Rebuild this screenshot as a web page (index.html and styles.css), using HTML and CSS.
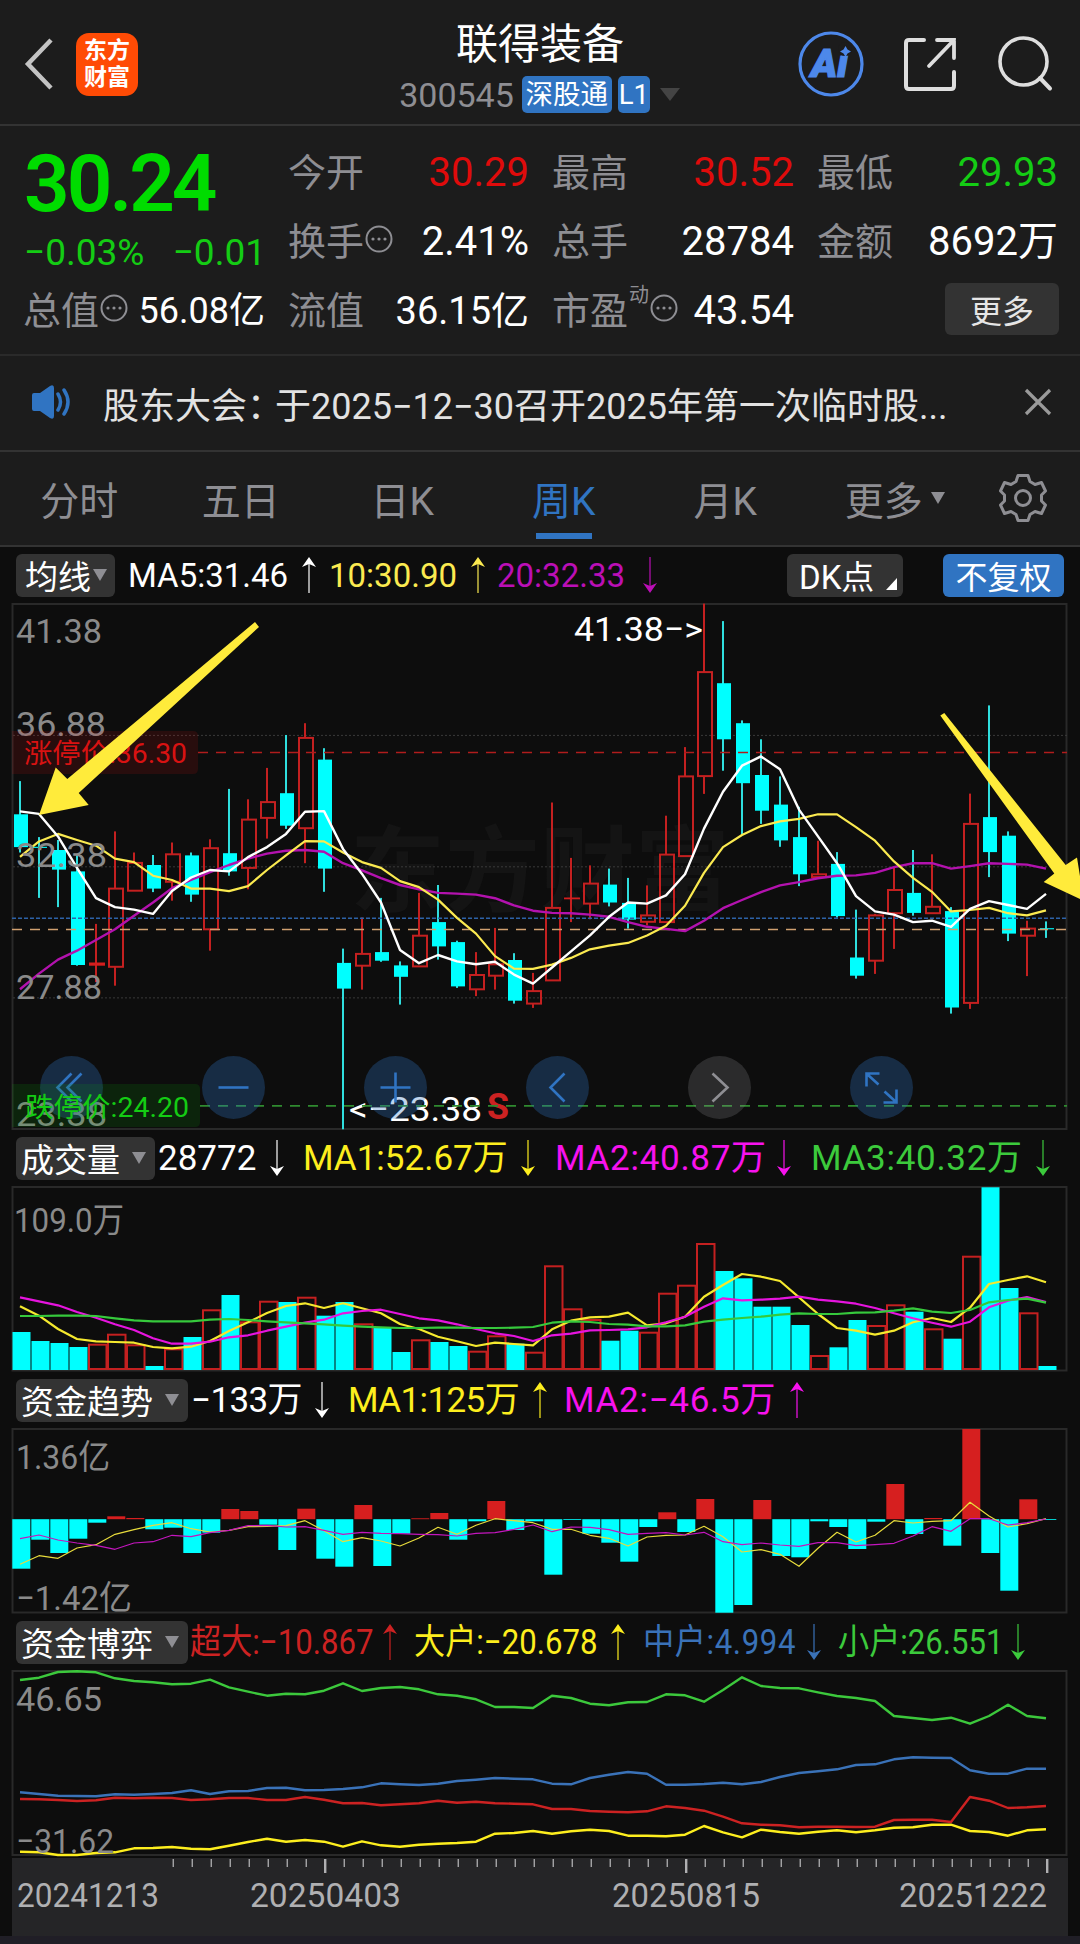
FILE: index.html
```html
<!DOCTYPE html>
<html lang="zh-CN">
  <head>
    <meta charset="UTF-8" />
    <meta name="viewport" content="width=device-width, initial-scale=1.0" />
    <title>联得装备 300545</title>
    <link rel="stylesheet" href="styles.css">
  </head>
  <body>
    <svg class="defs" width="0" height="0">
      <symbol id="up" viewBox="0 0 14 36">
        <path d="M7 4V36" fill="none" stroke="currentColor" stroke-width="1.6" opacity="0.75" />
        <path d="M7 0L14 10L7 7L0 10Z" fill="currentColor" />
      </symbol>
      <symbol id="down" viewBox="0 0 14 36">
        <path d="M7 0V32" fill="none" stroke="currentColor" stroke-width="1.6" opacity="0.75" />
        <path d="M7 36L14 26L7 29L0 26Z" fill="currentColor" />
      </symbol>
      <symbol id="dots" viewBox="0 0 28 28">
        <circle cx="14" cy="14" r="12.5" fill="none" stroke="currentColor" stroke-width="2" />
        <circle cx="8" cy="14" r="1.6" fill="currentColor" />
        <circle cx="14" cy="14" r="1.6" fill="currentColor" />
        <circle cx="20" cy="14" r="1.6" fill="currentColor" />
      </symbol>
    </svg>

    <div class="header">
      <div class="header-left">
        <svg class="back" width="30" height="52" viewBox="0 0 30 52">
          <path d="M27 2L4 26L27 50" fill="none" stroke="#c3c3c3" stroke-width="4.5" />
        </svg>
        <div class="logo"><span>东方</span><span>财富</span></div>
      </div>
      <div class="title">
        <h1>联得装备</h1>
        <div class="code">
          <span class="code-num">300545</span>
          <span class="tag">深股通</span>
          <span class="tag tag-l1">L1</span>
          <span class="tri tri-code"></span>
        </div>
      </div>
      <div class="header-right">
        <svg width="66" height="66" viewBox="0 0 66 66">
          <circle cx="33" cy="33" r="31" fill="none" stroke="#4d88ea" stroke-width="3.2" />
          <text class="ai" x="13" y="46" textLength="37" lengthAdjust="spacingAndGlyphs">Ai</text>
          <circle cx="47" cy="18" r="7" fill="#1c1c1c" />
          <path d="M47.500 15L49.500 18.500L53 20.500L49.500 22.500L47.500 26L45.500 22.500L42 20.500L45.500 18.500Z" fill="#4d88ea" />
        </svg>
        <svg width="56" height="56" viewBox="0 0 56 56">
          <path d="M22 4H7Q4 4 4 7V50Q4 53 7 53H49Q52 53 52 50V36" fill="none" stroke="#dedede" stroke-width="4" stroke-linecap="round" />
          <path d="M35 4H52V22M52 4L27 30" fill="none" stroke="#dedede" stroke-width="3.800" stroke-linecap="round" />
        </svg>
        <svg width="58" height="58" viewBox="0 0 58 58">
          <circle cx="27.500" cy="26.500" r="23.500" fill="none" stroke="#dedede" stroke-width="3.600" />
          <path d="M44 43L54 53.500" fill="none" stroke="#dedede" stroke-width="4" stroke-linecap="round" />
        </svg>
      </div>
    </div>

    <div class="quote">
      <div class="price-col">
        <div class="price">30.24</div>
        <div class="change"><span>−0.03%</span><span>−0.01</span></div>
      </div>
      <div class="cell"><span class="label">今开</span><span class="value red">30.29</span></div>
      <div class="cell"><span class="label">最高</span><span class="value red">30.52</span></div>
      <div class="cell"><span class="label">最低</span><span class="value green">29.93</span></div>
      <div class="cell"><span class="label">换手<svg class="dots"><use href="#dots" /></svg></span><span class="value">2.41%</span></div>
      <div class="cell"><span class="label">总手</span><span class="value">28784</span></div>
      <div class="cell"><span class="label">金额</span><span class="value">8692万</span></div>
      <div class="cell"><span class="label">总值<svg class="dots"><use href="#dots" /></svg></span><span class="value small">56.08亿</span></div>
      <div class="cell"><span class="label">流值</span><span class="value mid">36.15亿</span></div>
      <div class="cell"><span class="label">市盈<sup>动</sup><svg class="dots"><use href="#dots" /></svg></span><span class="value">43.54</span></div>
      <div class="cell cell-btn"><button class="more">更多</button></div>
    </div>

    <div class="notice">
      <svg width="42" height="36" viewBox="0 0 42 36">
        <path d="M2 11Q2 9 4 9H10L20 2Q24 0 24 4V32Q24 36 20 34L10 27H4Q2 27 2 25Z" fill="#3074c2" />
        <path d="M28 10Q33 18 28 26M34 6Q42 18 34 30" fill="none" stroke="#3074c2" stroke-width="3.500" stroke-linecap="round" />
      </svg>
      <p>股东大会<span class="colon">：</span>于2025−12−30召开2025年第一次临时股...</p>
      <svg width="28" height="28" viewBox="0 0 28 28">
        <path d="M2 2L26 26M26 2L2 26" stroke="#9a9a9a" stroke-width="3.200" />
      </svg>
    </div>

    <div class="tabs">
      <div class="tab">分时</div>
      <div class="tab">五日</div>
      <div class="tab">日K</div>
      <div class="tab active">周K</div>
      <div class="tab">月K</div>
      <div class="tab tab-more">更多<span class="tri tri-tab"></span></div>
      <div class="tab">
        <svg width="50" height="50" viewBox="-25 -25 50 50">
          <path d="M-5 -22.500H5L7 -16.500L12 -13.500L18.500 -15.500L22.500 -7L18.500 -3V3L22.500 7L18.500 15.500L12 13.500L7 16.500L5 22.500H-5L-7 16.500L-12 13.500L-18.500 15.500L-22.500 7L-18.500 3V-3L-22.500 -7L-18.500 -15.500L-12 -13.500L-7 -16.500Z" fill="none" stroke="#8e8e93" stroke-width="3" stroke-linejoin="round" />
          <circle r="7.500" fill="none" stroke="#8e8e93" stroke-width="3" />
        </svg>
      </div>
    </div>

    <div class="charts">
      <div class="legend legend-ma">
        <span class="pill">均线<i class="tri"></i></span>
        <span class="item white"><b>MA5:31.46</b><svg class="arrow"><use href="#up" /></svg></span>
        <span class="item lemon"><b>10:30.90</b><svg class="arrow"><use href="#up" /></svg></span>
        <span class="item purple"><b>20:32.33</b><svg class="arrow"><use href="#down" /></svg></span>
        <span class="pill pill-dk">DK点<i class="corner"></i></span>
        <span class="pill pill-blue">不复权</span>
      </div>
      <svg id="price" width="1080" height="527" viewBox="0 603 1080 527"></svg>

      <div class="legend legend-vol">
        <span class="pill">成交量<i class="tri"></i></span>
        <span class="item white"><b>28772</b><svg class="arrow"><use href="#down" /></svg></span>
        <span class="item yellow"><b>MA1:52.67万</b><svg class="arrow"><use href="#down" /></svg></span>
        <span class="item magenta wide"><b>MA2:40.87万</b><svg class="arrow"><use href="#down" /></svg></span>
        <span class="item lime wide"><b>MA3:40.32万</b><svg class="arrow"><use href="#down" /></svg></span>
      </div>
      <svg id="volume" width="1080" height="186" viewBox="0 1186 1080 186"></svg>

      <div class="legend legend-flow">
        <span class="pill">资金趋势<i class="tri"></i></span>
        <span class="item white tight"><b>−133万</b><svg class="arrow"><use href="#down" /></svg></span>
        <span class="item yellow tight"><b>MA1:125万</b><svg class="arrow"><use href="#up" /></svg></span>
        <span class="item magenta wide"><b>MA2:−46.5万</b><svg class="arrow"><use href="#up" /></svg></span>
      </div>
      <svg id="flow" width="1080" height="186" viewBox="0 1428 1080 186"></svg>

      <div class="legend legend-game">
        <span class="pill">资金博弈<i class="tri"></i></span>
        <span class="item crimson"><b>超大:−10.867</b><svg class="arrow"><use href="#up" /></svg></span>
        <span class="item yellow"><b>大户:−20.678</b><svg class="arrow"><use href="#up" /></svg></span>
        <span class="item blue wide"><b>中户:4.994</b><svg class="arrow"><use href="#down" /></svg></span>
        <span class="item lime"><b>小户:26.551</b><svg class="arrow"><use href="#down" /></svg></span>
      </div>
      <svg id="game" width="1080" height="188" viewBox="0 1670 1080 188"></svg>

      <div class="axis"><svg id="axis" width="1056" height="78" viewBox="12 1858 1056 78"></svg></div>
    </div>
    <script src="charts.js"></script>
  </body>
</html>
```
FILE: styles.css
```css
* {
  box-sizing: border-box;
}
body {
  margin: 0;
  width: 1080px;
  height: 1944px;
  overflow: hidden;
  background-color: #1c1c1c;
  color: #fff;
  font-family: Roboto, "Noto Sans CJK SC", sans-serif;
}
svg {
  display: block;
  flex: none;
}
.defs {
  position: absolute;
}
.tri {
  display: block;
  border: 7px solid transparent;
  border-top: 12px solid #8e8e93;
  border-bottom: 0;
}

/* header */
.header {
  display: grid;
  grid-template-columns: 360px 360px 360px;
  height: 126px;
  border-bottom: 2px solid #333;
}
.header-left {
  display: flex;
  align-items: center;
  padding-left: 24px;
  gap: 22px;
  height: 128px;
}
.logo {
  display: flex;
  flex-direction: column;
  align-items: center;
  justify-content: center;
  width: 62px;
  height: 63px;
  border-radius: 13px;
  background-color: #ff4b05;
  font-size: 23px;
  font-weight: 700;
  line-height: 27px;
}
.title {
  display: flex;
  flex-direction: column;
  align-items: center;
  padding-top: 20px;
}
.title h1 {
  margin: 0;
  font-size: 42px;
  font-weight: 400;
  line-height: 50px;
}
.code {
  display: flex;
  align-items: center;
  height: 37px;
  margin: 6px 0 0 -1px;
}
.code-num {
  font-size: 34px;
  color: #8e8e93;
  margin: 1px 8px 0 0;
}
.tag {
  height: 37px;
  line-height: 38px;
  width: 90px;
  text-align: center;
  border-radius: 5px;
  background-color: #3074c2;
  font-size: 27.500px;
}
.tag-l1 {
  width: 32px;
  margin: 0 10px 0 6px;
}
.tri-code {
  border-width: 13px 10px 0;
  border-top-color: #444;
}
.header-right {
  display: flex;
  align-items: center;
  height: 128px;
  padding-left: 78px;
  gap: 38px;
}
.ai {
  font-size: 39px;
  font-weight: 900;
  font-style: italic;
  fill: #4d88ea;
  stroke: #4d88ea;
  stroke-width: 1.2;
}

/* quote */
.quote {
  display: grid;
  grid-template-columns: 240px 239px 240px 239px;
  grid-template-rows: 69px 69px 69px;
  column-gap: 25px;
  height: 230px;
  padding: 11px 0 0 24px;
  border-bottom: 2px solid #2a2a2a;
}
.price-col {
  grid-row: span 2;
}
.price {
  height: 90px;
  margin-top: 1px;
  font-size: 80px;
  font-weight: 600;
  line-height: 93px;
  letter-spacing: -3px;
  color: #00dc00;
}
.change {
  display: flex;
  justify-content: space-between;
  margin-right: -2px;
  font-size: 37px;
  line-height: 50px;
  color: #14cc14;
}
.cell {
  display: flex;
  align-items: center;
  justify-content: space-between;
}
.label {
  display: flex;
  align-items: center;
  margin: 2px 0 0 -1px;
  font-size: 38px;
  line-height: 44px;
  color: #8e8e93;
  white-space: nowrap;
}
.label sup {
  width: 20px;
  margin: 0 2px 32px 1px;
  font-size: 20px;
  line-height: 20px;
}
.dots {
  width: 28px;
  height: 28px;
  margin: -5px 0 0 1px;
}
.label sup + .dots {
  margin-left: -1px;
}
.value {
  margin: 3px -1px 0 0;
  font-size: 40px;
  line-height: 44px;
  white-space: nowrap;
}
.small {
  font-size: 36px;
}
.mid {
  font-size: 38px;
}
.red {
  color: #e00b0b;
}
.green {
  color: #14cc14;
}
.cell-btn {
  justify-content: flex-end;
}
.more {
  width: 114px;
  height: 52px;
  margin: -2px -2px 0 0;
  padding: 0;
  border: 0;
  border-radius: 6px;
  background-color: #333;
  color: #e6e6e6;
  font: 32px Roboto, "Noto Sans CJK SC", sans-serif;
}

/* notice */
.notice {
  display: flex;
  align-items: center;
  height: 96px;
  padding: 0 28px 2px 30px;
  border-bottom: 2px solid #333;
}
.notice p {
  flex: 1;
  margin: 1px 0 0 31px;
  font-size: 36px;
  color: #e2e2e2;
  white-space: nowrap;
}
.colon {
  letter-spacing: -8px;
}

/* tabs */
.tabs {
  display: grid;
  grid-template-columns: repeat(6, 161.500px) 1fr;
  height: 95px;
  border-bottom: 2px solid #333;
}
.tab {
  display: flex;
  align-items: center;
  justify-content: center;
  padding: 0 3px 1px 0;
  font-size: 39px;
  color: #8e8e93;
}
.active {
  color: #3074c2;
  background: linear-gradient(#3074c2, #3074c2) 51px 81px / 56px 6px no-repeat;
}
.tab-more {
  padding-left: 16px;
}
.tri-tab {
  margin: 0 0 0 8px;
}

/* charts */
.charts {
  height: 1397px;
  background-color: #0d0d0d;
  border-bottom: 8px solid #201e26;
}
.legend {
  display: grid;
  align-items: center;
  height: 56px;
  padding-left: 16px;
  font-size: 35px;
}
.legend-ma {
  grid-template-columns: 99px 15px 186px 15px 154px 14px 158px 130px 116px 40px 121px;
  font-size: 33px;
}
.legend-vol {
  grid-template-columns: 139px 5px 124px 21px 230px 22px 234px 22px 237px;
}
.legend-flow {
  grid-template-columns: 172px 5px 136px 21px 197px 19px 238px;
}
.legend-game {
  grid-template-columns: 172px 4px 205px 19px 209px 20px 176px 19px 185px;
}
.legend > :nth-child(2) {
  grid-column: 3;
}
.legend > :nth-child(3) {
  grid-column: 5;
}
.legend > :nth-child(4) {
  grid-column: 7;
}
.legend > :nth-child(5) {
  grid-column: 9;
}
.legend > :nth-child(6) {
  grid-column: 11;
}
.pill {
  display: flex;
  align-items: center;
  justify-content: space-between;
  height: 43px;
  padding: 0 9px 0 5px;
  border-radius: 6px;
  background-color: #333;
  font-size: 33px;
  white-space: nowrap;
}
.legend-ma .pill {
  padding: 0 8px 0 9px;
}
.legend-ma .pill-dk {
  padding: 0 6px 0 12px;
}
.legend-ma .pill-blue {
  justify-content: center;
  padding: 0;
  background-color: #3074c2;
  font-size: 32px;
}
.corner {
  align-self: flex-end;
  margin-bottom: 7px;
  border-left: 11px solid transparent;
  border-bottom: 12px solid #fff;
}
.item {
  display: flex;
  align-items: center;
  justify-content: space-between;
  white-space: nowrap;
}
.item b {
  margin: 2px 0 0 -2px;
  font-weight: 400;
  line-height: 40px;
}
.wide b {
  letter-spacing: 0.7px;
}
.tight b {
  letter-spacing: -0.6px;
}
.legend-game .item b {
  width: 0;
  transform: scaleX(0.89);
  transform-origin: left;
}
.arrow {
  width: 14px;
  height: 36px;
}
.white {
  color: #fff;
}
.lemon {
  color: #fbea50;
}
.purple {
  color: #bb0fb6;
}
.yellow {
  color: #fdee1e;
}
.magenta {
  color: #f712ee;
}
.lime {
  color: #3cca3c;
}
.crimson {
  color: #cc2222;
}
.blue {
  color: #3a72b8;
}
.axis {
  width: 1056px;
  margin-left: 12px;
  background-color: #252527;
}

/* svg parts */
.frame {
  fill: none;
  stroke: #292929;
  stroke-width: 2;
}
.scale {
  font-size: 34px;
  fill: #8a8a8a;
}
.mark {
  font-size: 34px;
  fill: #fff;
}
.sell {
  font-size: 36px;
  font-weight: 700;
  fill: #cc2222;
}
.limit {
  font-size: 27px;
}
.watermark {
  font-size: 94px;
  font-weight: 700;
  fill: #141414;
}
.date {
  font-size: 33px;
  fill: #b0b0b2;
}
```
FILE: charts.js
```js
// cols: type, high, body top, body bottom, low (c = falling, r = rising, d = doji)
const candles = `c 535 628 720 735|c 692 719 722 862|c 700 728 783 888|c 742 788 1050 1052|d 935 1043 1052 1098
r 676 836 1055 1108|r 735 764 842 842|c 742 770 836 846|r 707 740 817 870|c 735 743 853 873
r 698 723 950 1010|c 557 737 788 800|r 586 643 778 838|r 498 594 638 696|c 406 569 660 669
r 373 414 667 765|c 443 475 780 845|c 1004 1044 1116 1510|r 917 1019 1052 1119|c 862 1014 1038 1041
c 1040 1051 1083 1161|r 848 968 1054 1054|c 826 930 998 1035|c 982 986 1110 1114|r 1014 1078 1118 1137
r 946 1048 1080 1119|c 1017 1036 1150 1158|r 1072 1123 1158 1170|r 595 890 1093 1093|d 750 861 866 930
r 771 822 878 922|c 780 825 875 886|c 806 876 923 948|r 827 911 929 939|r 632 741 930 930
r 440 522 745 745|r 38 230 521 571|c 87 261 418 506|c 365 373 541 685|c 418 518 618 655
c 522 601 701 719|c 607 692 796 829|r 702 796 804 804|c 734 767 913 917|c 895 1029 1080 1088
r 907 911 1038 1075|r 775 840 905 1005|c 728 848 904 912|r 740 887 905 905|c 888 899 1169 1186
r 570 655 1156 1173|c 323 636 734 804|c 676 688 962 983|r 926 948 968 1081|c 928 947 950 974`
  .split(/[|\n]/).map((s) => s.split(" "));

const ma5 = [620, 627, 690, 778, 863, 888, 895, 907, 843, 805, 784, 788, 748, 720, 683, 621, 619, 725, 795, 875, 1008, 1045, 1022, 1040, 1048, 1041, 1077, 1102, 1057, 1012, 967, 915, 875, 878, 855, 796, 668, 565, 492, 466, 502, 615, 690, 765, 857, 900, 909, 930, 926, 943, 893, 871, 882, 893, 851];
const ma10 = [747, 704, 683, 700, 716, 752, 762, 800, 812, 836, 836, 843, 829, 784, 743, 703, 704, 735, 762, 778, 815, 832, 867, 918, 962, 1025, 1060, 1061, 1049, 1030, 1006, 996, 988, 967, 940, 884, 792, 720, 686, 661, 648, 641, 628, 628, 664, 702, 760, 806, 845, 900, 896, 890, 905, 911, 897];
const ma20 = [1118, 1074, 1035, 1010, 980, 950, 912, 875, 835, 812, 790, 770, 752, 738, 730, 728, 733, 765, 785, 807, 826, 838, 848, 850, 853, 863, 883, 898, 904, 905, 909, 915, 930, 943, 949, 955, 926, 891, 868, 846, 827, 818, 807, 800, 799, 792, 776, 765, 765, 780, 773, 765, 767, 769, 780];

const vol = [606, 633, 639, 651, 641, 611, 643, 708, 655, 621, 538, 495, 574, 512, 516, 500, 557, 516, 580, 593, 666, 628, 636, 648, 662, 616, 641, 665, 406, 535, 567, 632, 602, 605, 488, 464, 339, 423, 445, 530, 530, 585, 675, 652, 570, 585, 523, 545, 595, 626, 377, 172, 474, 547, 708];
const vma1 = [529, 557, 597, 627, 634, 636, 638, 651, 655, 650, 633, 603, 577, 549, 528, 520, 534, 520, 535, 550, 582, 597, 620, 634, 648, 638, 642, 646, 598, 572, 562, 560, 548, 586, 580, 560, 500, 465, 432, 440, 453, 502, 552, 594, 602, 614, 602, 577, 564, 576, 533, 462, 450, 439, 457];
const vma2 = [502, 514, 526, 546, 563, 583, 600, 625, 641, 641, 635, 622, 616, 602, 590, 578, 569, 550, 543, 539, 552, 565, 571, 583, 597, 610, 618, 633, 616, 611, 601, 600, 598, 592, 577, 560, 530, 505, 511, 509, 506, 500, 509, 514, 521, 534, 550, 565, 578, 590, 575, 532, 512, 501, 516];
const vma3 = [558, 558, 557, 557, 558, 565, 571, 574, 574, 574, 569, 567, 570, 574, 577, 580, 583, 587, 590, 592, 594, 594, 593, 593, 594, 594, 593, 591, 578, 574, 576, 582, 584, 589, 589, 586, 575, 569, 564, 560, 554, 550, 552, 552, 548, 547, 542, 535, 545, 549, 540, 517, 510, 506, 518];

const net = [446, 359, 399, 356, 308, 289, 294, 328, 323, 399, 338, 267, 273, 314, 390, 266, 416, 440, 255, 438, 341, 295, 279, 359, 304, 243, 330, 304, 464, 300, 341, 368, 425, 321, 277, 336, 237, 578, 555, 240, 408, 412, 304, 321, 387, 305, 192, 342, 294, 377, 27, 399, 512, 238, 300];
const nma1 = [433, 407, 415, 384, 374, 343, 329, 316, 308, 326, 336, 331, 320, 319, 317, 302, 332, 365, 353, 363, 378, 354, 322, 343, 316, 296, 302, 308, 328, 328, 346, 355, 378, 351, 346, 345, 319, 350, 396, 389, 403, 439, 385, 337, 366, 346, 302, 309, 304, 302, 247, 288, 321, 311, 296];
const nma2 = [356, 345, 360, 369, 376, 388, 369, 365, 346, 350, 338, 331, 317, 316, 321, 320, 331, 343, 337, 340, 341, 343, 344, 348, 340, 338, 328, 315, 335, 321, 322, 329, 343, 340, 338, 345, 337, 365, 374, 369, 375, 379, 368, 368, 377, 374, 370, 348, 320, 334, 296, 296, 315, 308, 297];

const retail = [60, 53, 36, 34, 37, 55, 63, 67, 73, 71, 59, 82, 95, 107, 101, 103, 92, 70, 93, 84, 81, 88, 103, 107, 118, 141, 141, 144, 107, 114, 131, 136, 127, 126, 103, 106, 125, 90, 52, 78, 84, 85, 97, 108, 114, 123, 168, 174, 180, 173, 191, 168, 134, 168, 175];
const medium = [397, 402, 407, 408, 409, 403, 404, 402, 399, 391, 402, 394, 393, 384, 383, 391, 390, 387, 382, 370, 373, 375, 371, 363, 359, 354, 356, 358, 371, 373, 354, 344, 336, 341, 374, 374, 372, 368, 373, 366, 351, 339, 334, 328, 315, 313, 298, 292, 293, 294, 331, 341, 341, 326, 326];
const huge = [417, 418, 420, 423, 421, 413, 415, 413, 414, 420, 418, 414, 414, 420, 420, 411, 419, 430, 429, 436, 433, 430, 422, 428, 425, 430, 431, 433, 447, 447, 453, 455, 457, 454, 439, 444, 452, 470, 490, 494, 496, 502, 500, 500, 501, 500, 480, 479, 479, 486, 411, 422, 444, 442, 438];
const large = [575, 577, 585, 585, 579, 577, 565, 564, 561, 566, 568, 557, 546, 536, 545, 540, 545, 560, 544, 556, 560, 554, 551, 549, 545, 521, 519, 513, 521, 514, 509, 513, 527, 527, 529, 524, 498, 517, 532, 509, 516, 521, 515, 511, 517, 511, 503, 502, 494, 494, 513, 516, 527, 511, 508];

const STEP = 19;
const cx = (i) => 20 + STEP * i;
const scale = (base, k) => (v) => +(base + v / k).toFixed(1);

const line = (data, y, color, w) =>
  `<polyline points="${data.map((v, i) => cx(i) + "," + y(v)).join(" ")}" fill="none" stroke="${color}" stroke-width="${w}" stroke-linejoin="round"/>`;
const rect = (x, y, w, h, color) => `<rect x="${x}" y="${y}" width="${w}" height="${h}" fill="${color}"/>`;
const box = (x, y, w, h) =>
  `<rect x="${x + 1}" y="${y + 1}" width="${w - 2}" height="${Math.max(h - 2, 1)}" fill="none" stroke="#c42020" stroke-width="2"/>`;
const frame = (y, h) => `<rect class="frame" x="12.5" y="${y}" width="1054" height="${h}"/>`;
const text = (cls, x, y, s, w, extra = "") =>
  `<text class="${cls}" x="${x}" y="${y}" textLength="${w}" lengthAdjust="spacingAndGlyphs" ${extra}>${s}</text>`;
const hline = (x, y, color, w, dash) =>
  `<line x1="${x}" x2="1067" y1="${y}" y2="${y}" stroke="${color}" stroke-width="${w}" stroke-dasharray="${dash}"/>`;

function drawPrice() {
  const y = scale(590, 2.8);
  let s = text("watermark", 350, 905, "东方财富", 380) + frame(604, 525);
  [407, 775, 1142].forEach((v) => (s += hline(13, y(v), "#3a3a3a", 1, "2 2")));
  candles.forEach(([t, hi, top, bot, lo], i) => {
    const x = cx(i), a = y(+top), b = y(+bot), h = y(+hi), l = y(+lo);
    if (t === "c") {
      s += rect(x - 1, h, 2, +(l - h).toFixed(1), "#2fdede") + rect(x - 6, a, 14, +(b - a).toFixed(1), "#00ffff");
    } else if (t === "d") {
      s += rect(x - 1, h, 2, +(l - h).toFixed(1), "#c42020") + rect(x - 7, a, 16, +(b - a).toFixed(1), "#d41e1e");
    } else {
      s += rect(x - 1, h, 2, +(a - h).toFixed(1), "#c42020") + rect(x - 1, b, 2, +(l - b).toFixed(1), "#c42020");
      s += box(x - 7, a - 1, 16, +(b - a + 2).toFixed(1));
    }
  });
  s += hline(198, 752.5, "#b01c1c", 1.4, "10 8");
  s += hline(12, 918.3, "#2d62a8", 1.4, "4 2");
  s += hline(12, 929.5, "#d0a070", 1.3, "10 8");
  s += line(ma20, y, "#b312ae", 2.4) + line(ma10, y, "#fbea50", 2.2) + line(ma5, y, "#ffffff", 2.4);
  [["41.38", 643, 86], ["36.88", 736, 90], ["32.38", 867, 91], ["27.88", 999, 86], ["23.38", 1126, 91]].forEach(
    ([n, b, w]) => (s += text("scale", 16, b, n, w))
  );
  s += text("mark", 574, 640.5, "41.38−&gt;", 129) + text("mark", 349, 1121, "&lt;−23.38", 133);
  s += text("sell", 487, 1118.5, "S", 22);
  // limit-up and limit-down tags
  s += `<path d="M12 731H193Q198 731 198 736V769Q198 774 193 774H12Z" fill="#e01010" opacity="0.13"/>`;
  s += text("limit", 24, 763, "涨停价:36.30", 163, 'fill="#d81212"');
  s += hline(200, 1105.8, "#2f8a2f", 1.8, "10 8");
  // toolbar over the chart
  const icons = [
    "M0 -14L-14 0L0 14M10 -14L-4 0L10 14",
    "M-15 0H15",
    "M-15 0H15M0 -15V15",
    "M7 -14L-7 0L7 14",
    "M-7 -14L8 0L-7 14",
    "M-15 -1V-14H-2M-14 -13L-3 -3M15 2V15H2M14 14L3 4",
  ];
  icons.forEach((d, i) => {
    const gray = i === 4;
    s += `<g transform="translate(${71.5 + i * 162} 1087.5)"><circle r="31.500" fill="${gray ? "#8e8e93" : "#3074c2"}" opacity="${gray ? 0.24 : 0.3}"/>`;
    s += `<path d="${d}" fill="none" stroke="${gray ? "#8e8e93" : "#3074c2"}" stroke-width="2.600"/></g>`;
  });
  s += `<path d="M12 1084H195Q200 1084 200 1089V1122Q200 1127 195 1127H12Z" fill="#0ba00b" opacity="0.16"/>`;
  s += text("limit", 25, 1117, "跌停价:24.20", 164, 'fill="#14cc14"');
  s += `<path d="M255 622L259 627L78.700 793L88.700 805L39 815L55.700 767.500L67.300 779Z" fill="#ffeb3b"/>`;
  s += `<path d="M940.300 715.500L944.300 713L1065.700 865L1077 857.500L1084 901L1043.700 882L1054.300 873.600Z" fill="#ffeb3b"/>`;
  document.getElementById("price").innerHTML = s;
}

function drawVolume() {
  const y = scale(1130, 3);
  let s = frame(1187, 183.5) + text("scale", 14, 1232, "109.0万", 110);
  vol.forEach((v, i) => {
    const x = 12 + STEP * i, h = +(1370 - y(v)).toFixed(1);
    s += candles[i][0] === "c" ? rect(x + 0.5, y(v), 18, h, "#00ffff") : box(x, y(v), 19.5, h);
  });
  s += line(vma1, y, "#f5e92e", 2.2) + line(vma2, y, "#e614de", 2.2) + line(vma3, y, "#36c93c", 2.2);
  document.getElementById("volume").innerHTML = s;
}

function drawFlow() {
  const y = scale(1420, 3), zero = 1519.2;
  let s = frame(1429, 183.5) + text("scale", 16, 1469, "1.36亿", 94) + text("scale", 16, 1610, "−1.42亿", 116);
  net.forEach((v, i) => {
    const x = 12.3 + STEP * i, e = y(v);
    s += e < zero ? rect(x, e, 18, +(zero - e).toFixed(1), "#d61f1f") : rect(x, zero, 18, +(e - zero).toFixed(1), "#00ffff");
  });
  s += line(nma1, y, "#e8dc3c", 1.2) + line(nma2, y, "#c416be", 1.2);
  document.getElementById("flow").innerHTML = s;
}

function drawGame() {
  const y = scale(1660, 3);
  let s = frame(1671, 184) + text("scale", 16, 1711, "46.65", 86);
  s += line(retail, y, "#3cc83c", 2.4) + line(medium, y, "#3a72b8", 2.4) + line(huge, y, "#cc2222", 2.4) + line(large, y, "#fdee1e", 2.4);
  s += text("scale", 16, 1852.5, "−31.62", 98);
  document.getElementById("game").innerHTML = s;
}

function drawAxis() {
  let s = "";
  for (let i = 8; i < 55; i++) {
    const big = (i - 16) % 19 === 0;
    s += rect(cx(i) + (big ? 0 : 0.6), 1859, big ? 2.4 : 1.3, big ? 14 : 8, "#b0b0b2");
  }
  [["20241213", 17, 142], ["20250403", 250, 151], ["20250815", 612, 148], ["20251222", 899, 148]].forEach(
    ([d, x, w]) => (s += text("date", x, 1907, d, w))
  );
  document.getElementById("axis").innerHTML = s;
}

drawPrice();
drawVolume();
drawFlow();
drawGame();
drawAxis();
```
